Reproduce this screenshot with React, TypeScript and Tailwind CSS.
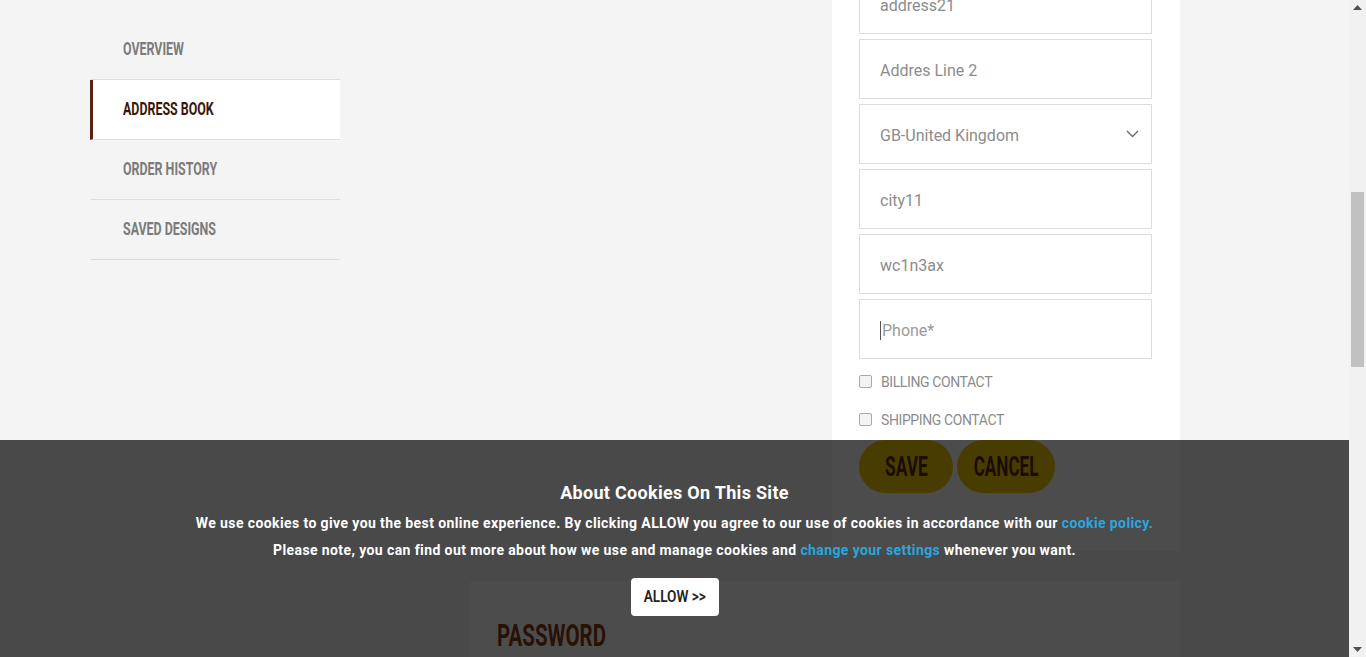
const NAV_ITEMS = ["OVERVIEW", "ADDRESS BOOK", "ORDER HISTORY", "SAVED DESIGNS"];

function Field({ value, placeholder, select }: { value?: string; placeholder?: string; select?: boolean }) {
  return (
    <div className="relative mb-[5px] flex h-[60px] items-center border border-[#dddddd] bg-white pl-5 pt-[3px] text-[16px] text-[#8c8c8c]">
      {placeholder ? (
        <>
          <span className="mr-[1px] h-[19px] w-px bg-[#555]" />
          <span className="text-[#9a9a9a]">{placeholder}</span>
        </>
      ) : (
        <span>{value}</span>
      )}
      {select && (
        <svg className="absolute right-[12px] top-[25px]" width="13" height="8" viewBox="0 0 13 8" fill="none">
          <path d="M1 1l5.5 5.5L12 1" stroke="#666" strokeWidth="1.3" />
        </svg>
      )}
    </div>
  );
}

function Check({ label }: { label: string }) {
  return (
    <label className="flex h-[38px] items-center gap-[9px] text-[14px] uppercase text-[#8c8c8c]">
      <span className="-mt-[2px] h-[13px] w-[13px] rounded-[2px] border border-[#a9a9a9] bg-[#f3f3f3]" />
      <span className="tracking-[-0.4px]">{label}</span>
    </label>
  );
}

export default function App() {
  return (
    <div className="flex h-[657px] w-[1366px] overflow-hidden" style={{ fontFamily: '"Roboto", "Liberation Sans", sans-serif' }}>
      <div className="relative h-full w-[1349px] overflow-hidden bg-[#f4f4f4]">
        <div className="flex pl-[90px]">
          <nav className="mt-[20px] w-[250px]">
            {NAV_ITEMS.map((item) => {
              const active = item === "ADDRESS BOOK";
              return (
                <div
                  key={item}
                  className={
                    active
                      ? "flex h-[60px] items-center border-b border-l-[3px] border-b-[#dddddd] border-l-[#5a2412] bg-white pb-[2px] pl-[30px] text-[18px] font-bold text-[#3b1608]"
                      : "ml-px flex h-[60px] items-center border-b border-[#dddddd] pb-[2px] pl-[32px] text-[18px] font-bold text-[#7b7b7b]"
                  }
                >
                  <span className="inline-block origin-left scale-x-[0.69] whitespace-nowrap">{item}</span>
                </div>
              );
            })}
          </nav>

          <div className="ml-[130px] w-[710px]">
            <div className="ml-[362px] -mt-[26px] w-[348px] bg-white pb-[58px] pl-[27px] pr-[28px]">
              <Field value="address21" />
              <Field value="Addres Line 2" />
              <Field value="GB-United Kingdom" select />
              <Field value="city11" />
              <Field value="wc1n3ax" />
              <Field placeholder="Phone*" />
              <div className="-mt-[1px]">
                <Check label="Billing contact" />
                <Check label="Shipping contact" />
              </div>
              <div className="mt-[1px] flex gap-[4px]">
                <button className="flex h-[53px] w-[94px] items-center justify-center rounded-full bg-[#f5c800] text-[28px] font-bold text-[#5a2a10]">
                  <span className="inline-block shrink-0 scale-x-[0.62]">SAVE</span>
                </button>
                <button className="flex h-[53px] w-[98px] items-center justify-center rounded-full bg-[#f5c800] text-[28px] font-bold text-[#5a2a10]">
                  <span className="inline-block shrink-0 scale-x-[0.61]">CANCEL</span>
                </button>
              </div>
            </div>

            <div className="mt-[30px] h-[200px] bg-white pl-[27px] pt-[38px]">
              <h2 className="text-[32px] font-bold leading-none text-[#8a3f12]">
                <span className="inline-block origin-left scale-x-[0.64]">PASSWORD</span>
              </h2>
            </div>
          </div>
        </div>

        <div className="absolute inset-x-0 bottom-0 top-[440px] bg-black/70 text-center text-white">
          <h3 className="mt-[42px] text-[18px] font-bold leading-[22px] tracking-[0.3px]">About Cookies On This Site</h3>
          <p className="mt-[6px] text-[14px] font-bold leading-[27px] tracking-[0.4px]">
            We use cookies to give you the best online experience. By clicking ALLOW you agree to our use of cookies in
            accordance with our <span className="text-[#2ba6de]">cookie policy.</span>
            <br />
            Please note, you can find out more about how we use and manage cookies and{" "}
            <span className="text-[#2ba6de]">change your settings</span> whenever you want.
          </p>
          <button className="mt-[14px] h-[38px] w-[88px] rounded-[4px] bg-white text-[17px] font-semibold text-[#222]">
            <span className="inline-block scale-x-[0.8] whitespace-nowrap">ALLOW &gt;&gt;</span>
          </button>
        </div>
      </div>

      <div className="flex h-full w-[17px] flex-col items-center bg-[#f1f1f1]">
        <svg className="mt-[5px]" width="9" height="5" viewBox="0 0 9 5">
          <path d="M0 5h9L4.5 0z" fill="#505050" />
        </svg>
        <div className="mt-[182px] h-[175px] w-[13px] bg-[#c1c1c1]" />
        <div className="flex-1" />
        <svg className="mb-[5px]" width="9" height="5" viewBox="0 0 9 5">
          <path d="M0 0h9L4.5 5z" fill="#505050" />
        </svg>
      </div>
    </div>
  );
}
